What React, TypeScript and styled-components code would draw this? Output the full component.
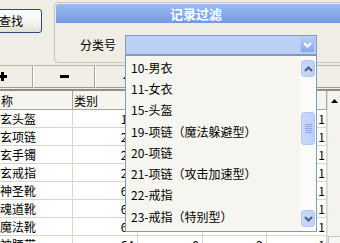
import React from "react";
import styled, { createGlobalStyle } from "styled-components";

const Global = createGlobalStyle`
  * { box-sizing: border-box; }
  html, body { margin: 0; padding: 0; }
  body {
    background: #efede4;
    font-family: "Noto Sans CJK SC", "Liberation Sans", sans-serif;
    font-size: 12px;
    line-height: 14px;
    color: #000;
  }
`;

const Screen = styled.div`
  position: relative;
  width: 340px;
  height: 243px;
  overflow: hidden;
  background: #efede4;
`;

const Top = styled.div`
  display: flex;
  align-items: flex-start;
  height: 63px;
`;

const FindSlot = styled.div`
  flex: none;
  width: 54px;
  padding-top: 9px;
`;

const FindButton = styled.button`
  display: flex;
  align-items: center;
  justify-content: center;
  width: 62px;
  height: 24px;
  margin-left: -20px;
  padding: 0;
  border: 1px solid #2c4a72;
  border-radius: 3px;
  background: linear-gradient(#ffffff, #f6f5ef 55%, #e2dfd2);
  font: 12px/14px "Noto Sans CJK SC", sans-serif;
  color: #000;
`;

const Panel = styled.section`
  flex: none;
  display: flex;
  flex-direction: column;
  width: 290px;
  height: 61px;
  margin-top: 2px;
  border: 1px solid #c8c5b8;
  border-radius: 4px;
`;

const PanelTitle = styled.div`
  display: flex;
  align-items: center;
  justify-content: center;
  height: 19px;
  margin: 1px 1px 0;
  padding-right: 6px;
  border-radius: 3px 3px 0 0;
  background: linear-gradient(#9dbbf1, #7299e3);
  color: #fff;
  font-weight: 700;
  font-size: 13px;
`;

const FilterRow = styled.div`
  display: flex;
  align-items: center;
  gap: 9px;
  padding: 12px 0 0 25px;
`;

const Label = styled.span`
  flex: none;
  width: 36px;
  white-space: nowrap;
  font-size: 12px;
`;

const Combo = styled.div`
  flex: none;
  display: flex;
  justify-content: flex-end;
  width: 192px;
  height: 20px;
  padding: 1px;
  border: 1px solid #7f9db9;
  background: #bcd0f6;
`;

const ComboButton = styled.div`
  display: flex;
  align-items: center;
  justify-content: center;
  width: 15px;
  height: 16px;
  border: 1px solid #b3c8f5;
  border-radius: 2px;
  background: linear-gradient(#b4cbf8, #86a8ec);
`;

const Toolbar = styled.div`
  display: flex;
  height: 26px;
  padding-top: 2px;
`;

const ToolButton = styled.div`
  flex: none;
  display: flex;
  align-items: center;
  justify-content: center;
  width: 62px;
  height: 23px;
  border-top: 1px solid #b9b6a9;
  border-left: 1px solid #ffffff;
  border-right: 1px solid #a9a79c;
  border-bottom: 1px solid #9f9d93;
  background: #f0eee6;

  &:first-child {
    margin-left: -29px;
  }
`;

const Grid = styled.div`
  display: flex;
  border-top: 2px solid #8f8d85;
`;

const Table = styled.div`
  flex: none;
  display: grid;
  width: 327px;
  grid-template-columns: 73px 65px 65px 64px 60px;
  grid-template-rows: 19px;
  grid-auto-rows: 18px;
  background: #fff;
`;

const Cell = styled.div<{ $num?: boolean; $head?: boolean }>`
  display: flex;
  align-items: center;
  justify-content: ${(p) => (p.$num ? "flex-end" : "flex-start")};
  padding: 1px ${(p) => (p.$num ? "3px" : "0")} 0 ${(p) => (p.$head ? "1px" : "0")};
  overflow: hidden;
  white-space: nowrap;
  border-right: 1px solid ${(p) => (p.$head ? "#a8a69e" : "#d7d4cc")};
  border-bottom: 1px solid ${(p) => (p.$head ? "#a8a69e" : "#d7d4cc")};
  background: ${(p) => (p.$head ? "#f5f4ef" : "#fff")};
  font-size: 12px;

  &:nth-child(5n) {
    padding-right: 1px;
  }
`;

const GridScroll = styled.div`
  flex: none;
  display: flex;
  flex-direction: column;
  width: 13px;
  background: #f4f3ee;
  border-left: 1px solid #e2e0d8;
`;

const ArrowBox = styled.div`
  display: flex;
  align-items: center;
  justify-content: center;
  height: 19px;
`;

const GridThumb = styled.div`
  height: 20px;
  margin-top: 126px;
  border-top: 1px solid #c9c7bd;
  border-left: 1px solid #c9c7bd;
  background: #f7f6f2;
`;

const DropList = styled.div`
  position: absolute;
  left: 125px;
  top: 55px;
  z-index: 2;
  display: flex;
  width: 192px;
  height: 177px;
  border: 1px solid #7f9db9;
  background: #f6f5f0;
`;

const Options = styled.ul`
  flex: 1;
  margin: 0;
  padding: 1px 0 0;
  list-style: none;
`;

const Option = styled.li`
  display: flex;
  align-items: center;
  height: 21.3px;
  padding-left: 5px;
  white-space: nowrap;
  font-size: 12px;
`;

const ListScroll = styled.div`
  flex: none;
  display: flex;
  flex-direction: column;
  width: 16px;
  padding: 4px 1px;
  background: #fbfbf9;
`;

const ScrollBtn = styled.div<{ $thumb?: boolean }>`
  display: flex;
  align-items: center;
  justify-content: center;
  height: ${(p) => (p.$thumb ? "33px" : "17px")};
  border: 1px solid #b5c8f3;
  border-radius: 3px;
  background: linear-gradient(90deg, #cad9fd, #bccff9);
`;

const Gap = styled.div<{ $h?: number }>`
  flex: ${(p) => (p.$h ? "none" : "1")};
  height: ${(p) => (p.$h ? `${p.$h}px` : "auto")};
`;

const Chevron = ({ up, color = "#4d6185" }: { up?: boolean; color?: string }) => (
  <svg width="9" height="6" viewBox="0 0 9 6">
    <path
      d={up ? "M1 5 L4.5 1.5 L8 5" : "M1 1 L4.5 4.5 L8 1"}
      fill="none"
      stroke={color}
      strokeWidth="2"
    />
  </svg>
);

const Grip = () => (
  <svg width="7" height="9" viewBox="0 0 7 9">
    {[0, 2, 4, 6, 8].map((y) => (
      <rect key={y} x="0" y={y} width="7" height="1" fill="#8fa9e0" />
    ))}
  </svg>
);

const rows = [
  ["玄头盔", "15", "", "", "1"],
  ["玄项链", "20", "", "", "1"],
  ["玄手镯", "24", "", "", "1"],
  ["玄戒指", "22", "", "", "1"],
  ["神圣靴", "62", "", "", "1"],
  ["魂道靴", "62", "", "", "1"],
  ["魔法靴", "62", "", "", "1"],
  ["神腰带", "64", "0", "2", "1"],
];

const options = [
  "10-男衣",
  "11-女衣",
  "15-头盔",
  "19-项链（魔法躲避型）",
  "20-项链",
  "21-项链（攻击加速型）",
  "22-戒指",
  "23-戒指（特别型）",
];

export default function App() {
  return (
    <Screen>
      <Global />
      <Top>
        <FindSlot>
          <FindButton>查找</FindButton>
        </FindSlot>
        <Panel>
          <PanelTitle>记录过滤</PanelTitle>
          <FilterRow>
            <Label>分类号</Label>
            <Combo>
              <ComboButton>
                <Chevron color="#ffffff" />
              </ComboButton>
            </Combo>
          </FilterRow>
        </Panel>
      </Top>

      <Toolbar>
        <ToolButton>
          <svg width="9" height="9" viewBox="0 0 9 9">
            <rect x="0" y="3" width="9" height="3" fill="#000" />
            <rect x="3" y="0" width="3" height="9" fill="#000" />
          </svg>
        </ToolButton>
        <ToolButton>
          <svg width="9" height="3" viewBox="0 0 9 3">
            <rect x="0" y="0" width="9" height="3" fill="#000" />
          </svg>
        </ToolButton>
        <ToolButton>
          <svg width="7" height="4" viewBox="0 0 7 4">
            <path d="M0 4 L3.5 0 L7 4 Z" fill="#000" />
          </svg>
        </ToolButton>
        <ToolButton />
        <ToolButton />
        <ToolButton />
      </Toolbar>

      <Grid>
        <Table>
          <Cell $head>称</Cell>
          <Cell $head>类别</Cell>
          <Cell $head />
          <Cell $head />
          <Cell $head />
          {rows.map((r) =>
            r.map((v, i) => (
              <Cell key={r[0] + i} $num={i > 0}>
                {v}
              </Cell>
            ))
          )}
        </Table>
        <GridScroll>
          <ArrowBox>
            <svg width="7" height="4" viewBox="0 0 7 4">
              <path d="M0 4 L3.5 0 L7 4 Z" fill="#000" />
            </svg>
          </ArrowBox>
          <GridThumb />
        </GridScroll>
      </Grid>

      <DropList>
        <Options>
          {options.map((o) => (
            <Option key={o}>{o}</Option>
          ))}
        </Options>
        <ListScroll>
          <ScrollBtn>
            <Chevron up />
          </ScrollBtn>
          <Gap $h={35} />
          <ScrollBtn $thumb>
            <Grip />
          </ScrollBtn>
          <Gap />
          <ScrollBtn>
            <Chevron />
          </ScrollBtn>
        </ListScroll>
      </DropList>
    </Screen>
  );
}
